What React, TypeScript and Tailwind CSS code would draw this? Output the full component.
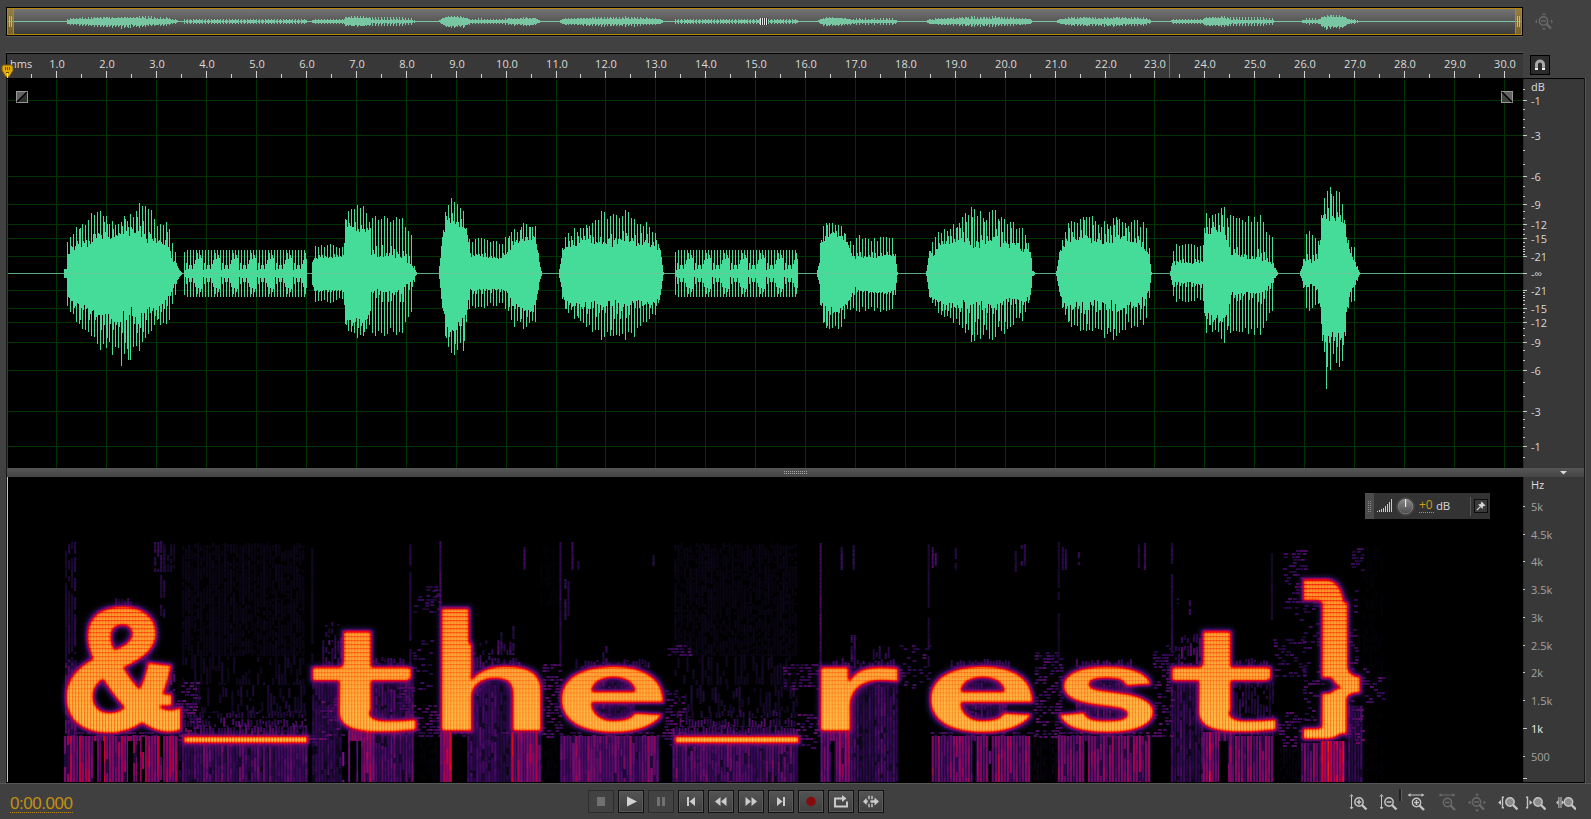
import React from "react";

/* ---------- helpers ---------- */

function makeRandom(seed: number) {
  let s = seed >>> 0;
  return () => {
    s = (s * 1664525 + 1013904223) >>> 0;
    return s / 4294967296;
  };
}

type Key = [number, number, number];

function sample(keys: Key[], x: number): [number, number] {
  for (let i = 1; i < keys.length; i++) {
    if (x <= keys[i][0]) {
      const a = keys[i - 1];
      const b = keys[i];
      const t = (x - a[0]) / (b[0] - a[0] || 1);
      return [a[1] + (b[1] - a[1]) * t, a[2] + (b[2] - a[2]) * t];
    }
  }
  return [1, 1];
}

/* ---------- waveform data: [x, peak, body] above and below the axis ---------- */

interface Burst {
  comb?: boolean;
  up: Key[];
  down: Key[];
}

const BURSTS: Burst[] = [
  {
    up: [[64, 4, 3], [66, 5, 4], [67, 35, 16], [73, 42, 22], [85, 54, 23], [91, 66, 28], [98, 60, 30], [104, 62, 34], [113, 50, 32], [121, 56, 34], [130, 58, 36], [137, 68, 40], [146, 68, 30], [155, 56, 28], [160, 48, 26], [166, 50, 26], [170, 44, 18], [172, 30, 11], [176, 18, 9], [178, 5, 4], [181, 1, 1]],
    down: [[64, 4, 3], [66, 5, 4], [67, 36, 20], [73, 44, 28], [85, 62, 30], [91, 68, 36], [98, 72, 36], [104, 78, 30], [113, 80, 43], [121, 80, 38], [130, 84, 30], [137, 78, 44], [146, 62, 33], [155, 52, 30], [165, 50, 24], [170, 46, 20], [172, 30, 10], [176, 18, 8], [178, 5, 3], [181, 1, 1]],
  },
  { comb: true, up: [[184, 21, 3], [186, 23, 3], [306, 23, 3]], down: [[184, 21, 3], [186, 23, 3], [306, 23, 3]] },
  {
    up: [[312, 12, 10], [314, 28, 14], [343, 28, 15], [345, 54, 42], [349, 62, 46], [356, 70, 42], [362, 70, 38], [369, 52, 40], [371, 56, 16], [403, 57, 15], [406, 46, 9], [412, 38, 5], [414, 8, 4], [416, 1, 1]],
    down: [[312, 12, 8], [314, 28, 16], [343, 28, 15], [345, 50, 44], [349, 58, 46], [356, 66, 42], [361, 68, 44], [368, 50, 40], [371, 60, 15], [403, 60, 15], [406, 46, 9], [412, 38, 5], [414, 8, 3], [416, 1, 1]],
  },
  {
    up: [[439, 8, 4], [441, 32, 26], [446, 66, 46], [450, 76, 50], [455, 72, 46], [460, 68, 42], [464, 62, 44], [467, 44, 34], [470, 32, 15], [475, 38, 15], [490, 34, 14], [500, 30, 13], [506, 38, 18], [514, 45, 26], [520, 48, 32], [535, 51, 30], [538, 20, 16], [541, 2, 1]],
    down: [[439, 5, 3], [441, 30, 24], [446, 70, 50], [450, 82, 52], [455, 80, 48], [460, 72, 44], [464, 80, 42], [467, 42, 32], [470, 34, 13], [475, 37, 15], [490, 33, 14], [500, 30, 14], [506, 37, 16], [514, 54, 28], [525, 54, 34], [535, 51, 30], [538, 16, 12], [541, 2, 1]],
  },
  {
    up: [[559, 4, 3], [562, 25, 20], [564, 37, 24], [575, 45, 26], [590, 50, 28], [600, 60, 26], [610, 62, 25], [620, 60, 25], [628, 66, 25], [632, 55, 26], [645, 52, 28], [655, 42, 24], [660, 26, 22], [663, 2, 1]],
    down: [[559, 4, 3], [562, 25, 18], [564, 37, 25], [575, 44, 29], [590, 57, 27], [603, 64, 25], [620, 67, 25], [636, 61, 25], [645, 50, 27], [655, 42, 25], [660, 24, 20], [663, 2, 1]],
  },
  { comb: true, up: [[675, 21, 3], [679, 23, 3], [797, 23, 3]], down: [[675, 21, 3], [679, 23, 3], [797, 23, 3]] },
  {
    up: [[817, 3, 2], [819, 14, 10], [821, 44, 28], [825, 50, 32], [831, 53, 36], [842, 50, 33], [847, 33, 28], [853, 32, 12], [858, 38, 15], [870, 36, 15], [892, 37, 16], [895, 20, 16], [897, 2, 1]],
    down: [[817, 3, 2], [819, 14, 10], [821, 46, 28], [828, 57, 33], [842, 56, 31], [848, 35, 26], [855, 38, 13], [870, 37, 17], [892, 38, 17], [895, 22, 14], [897, 2, 1]],
  },
  {
    up: [[926, 2, 1], [929, 25, 22], [934, 38, 16], [940, 42, 26], [955, 50, 30], [965, 61, 25], [970, 65, 25], [985, 59, 24], [996, 63, 27], [1005, 53, 25], [1015, 50, 25], [1024, 43, 20], [1030, 26, 20], [1032, 3, 2], [1034, 1, 1]],
    down: [[926, 2, 1], [929, 26, 22], [940, 42, 27], [955, 50, 28], [965, 61, 25], [973, 66, 25], [990, 64, 26], [1005, 59, 23], [1015, 50, 24], [1024, 43, 24], [1030, 24, 20], [1032, 3, 2], [1034, 1, 1]],
  },
  {
    up: [[1056, 2, 1], [1059, 22, 18], [1062, 34, 24], [1068, 51, 28], [1075, 53, 30], [1090, 62, 30], [1100, 50, 28], [1110, 53, 26], [1118, 62, 31], [1125, 51, 32], [1135, 52, 30], [1145, 52, 20], [1149, 26, 16], [1151, 2, 1]],
    down: [[1056, 2, 1], [1059, 20, 18], [1062, 34, 26], [1068, 49, 28], [1080, 59, 26], [1100, 61, 26], [1117, 68, 25], [1125, 56, 27], [1135, 51, 27], [1145, 52, 20], [1149, 26, 14], [1151, 2, 1]],
  },
  {
    up: [[1170, 2, 1], [1172, 20, 10], [1175, 29, 8], [1203, 29, 9], [1204, 57, 40], [1210, 64, 38], [1222, 66, 40], [1230, 59, 18], [1240, 56, 14], [1262, 57, 12], [1265, 43, 10], [1272, 36, 7], [1274, 7, 5], [1277, 1, 1]],
    down: [[1170, 2, 1], [1172, 20, 10], [1175, 28, 7], [1203, 28, 9], [1204, 56, 36], [1212, 62, 40], [1224, 67, 40], [1230, 59, 18], [1262, 61, 16], [1268, 40, 10], [1272, 36, 8], [1274, 7, 4], [1277, 1, 1]],
  },
  {
    up: [[1300, 2, 1], [1303, 14, 9], [1305, 41, 10], [1312, 41, 10], [1318, 34, 14], [1321, 60, 42], [1323, 84, 50], [1328, 80, 52], [1332, 88, 50], [1339, 85, 50], [1344, 68, 48], [1346, 42, 34], [1350, 29, 19], [1355, 24, 7], [1357, 8, 4], [1359, 1, 1]],
    down: [[1300, 2, 1], [1303, 14, 9], [1305, 36, 10], [1312, 37, 10], [1318, 32, 14], [1321, 52, 40], [1323, 88, 56], [1328, 94, 60], [1332, 90, 58], [1339, 96, 58], [1344, 90, 56], [1346, 44, 36], [1350, 30, 17], [1355, 26, 7], [1357, 8, 4], [1359, 1, 1]],
  },
];

const COMB_BODY = [3, 10, 4, 8, 8, 4, 9, 13, 20, 14, 18, 15];

function buildColumns(): Array<[number, number, number]> {
  const rnd = makeRandom(11);
  const out: Array<[number, number, number]> = [];
  for (const b of BURSTS) {
    const x0 = b.up[0][0];
    const x1 = b.up[b.up.length - 1][0];
    for (let x = x0; x <= x1; x++) {
      const [pu, bu] = sample(b.up, x);
      const [pd, bd] = sample(b.down, x);
      const i = x - x0;
      let u: number;
      let d: number;
      if (b.comb) {
        if (i % 3 === 0) {
          u = pu;
          d = pd;
        } else {
          const v = COMB_BODY[(Math.floor(i / 3) * 2 + (i % 3) - 1) % COMB_BODY.length];
          u = v;
          d = v;
        }
      } else if (i % 3 === 0) {
        const j = 0.88 + rnd() * 0.15;
        u = pu * j;
        d = pd * (j + (rnd() - 0.5) * 0.06);
      } else {
        const thin = bu < 20;
        const r = rnd();
        const k = thin ? (i % 3 === 1 ? 0.3 : 0.12) : i % 3 === 1 ? (r > 0.5 ? 0.9 : 0.5) : 0.3;
        u = bu + (pu - bu) * k * rnd();
        d = bd + (pd - bd) * k * rnd();
      }
      out.push([x, Math.round(u), Math.round(d)]);
    }
  }
  const set = (x: number, v: number) => {
    const c = out.find((o) => o[0] === x);
    if (c) c[2] = v;
  };
  set(1326, 115);
  set(121, 92);
  set(128, 86);
  return out;
}

const COLUMNS = buildColumns();
const WAVE_PATH = COLUMNS.map(([x, u, d]) => `M${x - 6.5} ${194 - u}V${195 + d}`).join("");
const MINI_PATH = COLUMNS.map(([x, u, d]) => {
  const a = Math.max(0, Math.round(u * 0.072));
  const b = Math.max(0, Math.round(d * 0.072));
  return `M${x - 6.5} ${14 - a}V${15 + b}`;
}).join("");

const tickX = (n: number) => 6 + Math.round(50 * n) - Math.floor(n / 11.5);
const SECONDS = Array.from({ length: 30 }, (_, i) => i + 1);
const GRID_ROWS = [100, 135, 176, 204, 224, 238, 256, 290, 308, 322, 342, 370, 411, 446];

const DB_MARKS: Array<[number, string]> = [
  [100, "-1"], [135, "-3"], [176, "-6"], [204, "-9"], [224, "-12"], [238, "-15"], [256, "-21"], [273, "-∞"],
  [290, "-21"], [308, "-15"], [322, "-12"], [342, "-9"], [370, "-6"], [411, "-3"], [446, "-1"],
];
const DB_MINOR = [89, 109, 119, 127, 150, 164, 186, 196, 211, 218, 229, 234, 242, 246, 249, 251, 254, 292, 295, 297, 300, 304, 312, 317, 328, 335, 350, 360, 382, 396, 419, 427, 437, 457];
const HZ_MARKS: Array<[number, string]> = [
  [506, "5k"], [534, "4.5k"], [561, "4k"], [589, "3.5k"], [617, "3k"], [645, "2.5k"], [672, "2k"], [700, "1.5k"], [728, "1k"], [756, "500"],
];

/* ---------- spectrogram ---------- */

const SPECTRO_FONT = '"Liberation Mono", monospace';

/** x0, x1, y0, y1 */
type Box = [number, number, number, number];

interface Letter {
  ch: string;
  x0: number;
  x1: number;
  top: number;
  bottom: number;
  /** height in em that "top" refers to; the ink's own top when left out */
  at?: number;
  /** energy bands added to the letter */
  bands?: Box[];
  /** extra weight, in em/100 */
  weight?: number;
  /** inner anchors, [height in em, y], from top to bottom */
  knots?: Array<[number, number]>;
}

const LETTERS: Letter[] = [
  { ch: "&", x0: 68, x1: 179, top: 609, bottom: 730.5, weight: 2.6, bands: [[149, 172, 694, 706]] },
  { ch: "_", x0: 182, x1: 309, top: 736.5, bottom: 743.5 },
  { ch: "t", x0: 319, x1: 417, top: 667, bottom: 732, at: 0.528, bands: [[343, 371, 631, 712], [312, 409, 667, 681]] },
  { ch: "h", x0: 441, x1: 541, top: 666, bottom: 731, at: 0.539, bands: [[441, 469, 608, 731]] },
  { ch: "e", x0: 560, x1: 664, top: 667, bottom: 732, weight: 0.8 },
  { ch: "_", x0: 673, x1: 800, top: 736.5, bottom: 743.5 },
  { ch: "r", x0: 820, x1: 898, top: 667, bottom: 731, bands: [[820, 848, 667, 731]] },
  { ch: "e", x0: 929, x1: 1033, top: 667, bottom: 732, weight: 0.8 },
  { ch: "s", x0: 1058, x1: 1152, top: 667, bottom: 732, weight: 0.8 },
  { ch: "t", x0: 1178, x1: 1276, top: 667, bottom: 732, at: 0.528, bands: [[1202, 1230, 631, 712], [1171, 1268, 667, 681]] },
  { ch: "}", x0: 1301, x1: 1360, top: 577, bottom: 739, knots: [[0.26, 687]], bands: [[1321, 1347, 602, 678], [1321, 1346, 693, 734]] },
];

interface Ink {
  left: number;
  right: number;
  up: number;
  down: number;
}

function measureInk(chars: string[]): Record<string, Ink> {
  const ctx = document.createElement("canvas").getContext("2d")!;
  ctx.font = `bold 100px ${SPECTRO_FONT}`;
  const out: Record<string, Ink> = {};
  for (const c of chars) {
    const m = ctx.measureText(c);
    out[c] = { left: -m.actualBoundingBoxLeft, right: m.actualBoundingBoxRight, up: m.actualBoundingBoxAscent, down: m.actualBoundingBoxDescent };
  }
  return out;
}

function Letters({ ink, id, shade, ...rest }: { ink: Record<string, Ink>; id: string; shade: string } & React.SVGProps<SVGGElement>) {
  return (
    <g {...rest} fill={shade} fontFamily={SPECTRO_FONT} fontWeight={700} fontSize={100}>
      {LETTERS.map((l, i) => {
        const m = ink[l.ch];
        const sx = (l.x1 - l.x0) / (m.right - m.left);
        const tx = l.x0 - m.left * sx;
        const bands = (l.bands ?? []).map(([x0, x1, y0, y1]) => <rect key={`${x0}-${y0}`} x={x0} y={y0} width={x1 - x0} height={y1 - y0} rx="2" />);
        if (!l.knots) {
          const up = l.at ? l.at * 100 : m.up;
          const sy = (l.bottom - l.top) / (up + m.down);
          return (
            <g key={i}>
              <text transform={`matrix(${sx} 0 0 ${sy} ${tx} ${l.bottom - m.down * sy})`} stroke={l.weight ? shade : undefined} strokeWidth={l.weight}>{l.ch}</text>
              {bands}
            </g>
          );
        }
        const pts: Array<[number, number]> = [[m.up, l.top], ...l.knots.map(([u, y]): [number, number] => [u * 100, y]), [-m.down, l.bottom]];
        return (
          <g key={i}>
            {bands}
            {pts.slice(1).map((p, k) => {
              const q = pts[k];
              const sy = (p[1] - q[1]) / (q[0] - p[0]);
              const base = p[1] + p[0] * sy;
              const cut = `${id}-${i}-${k}`;
              const y0 = k === 0 ? q[1] - 12 : q[1];
              const y1 = k === pts.length - 2 ? p[1] + 12 : p[1];
              return (
                <g key={cut}>
                  <clipPath id={cut}>
                    <rect x={l.x0 - 14} y={y0} width={l.x1 - l.x0 + 28} height={y1 - y0} />
                  </clipPath>
                  <g clipPath={`url(#${cut})`}>
                    <text transform={`matrix(${sx} 0 0 ${sy} ${tx} ${base})`}>{l.ch}</text>
                  </g>
                </g>
              );
            })}
          </g>
        );
      })}
    </g>
  );
}

/* [x0, x1, y0, y1, level, chance of a gap, dash length] */
type Field = [number, number, number, number, number, number, number];

const COLUMN_FIELDS: Field[] = [
  // harmonics under the letters
  [64, 176, 736, 783, 0.51, 0.07, 12],
  [176, 182, 736, 783, 0.25, 0.2, 8],
  [182, 308, 743, 783, 0.37, 0.05, 8],
  [182, 308, 725, 738, 0.38, 0.15, 4],
  [312, 342, 682, 783, 0.29, 0.1, 6],
  [342, 372, 730, 783, 0.53, 0.05, 12],
  [372, 412, 720, 783, 0.42, 0.06, 8],
  [372, 412, 681, 720, 0.34, 0.15, 5],
  [440, 451, 732, 783, 0.6, 0.03, 14],
  [467, 512, 682, 783, 0.33, 0.1, 6],
  [511, 540, 732, 783, 0.53, 0.05, 12],
  [560, 660, 736, 783, 0.47, 0.05, 12],
  [672, 796, 743, 783, 0.39, 0.05, 8],
  [672, 796, 725, 738, 0.38, 0.15, 4],
  [820, 848, 732, 783, 0.53, 0.05, 12],
  [847, 897, 684, 783, 0.33, 0.1, 6],
  [928, 1030, 736, 783, 0.47, 0.05, 12],
  [1057, 1150, 736, 783, 0.46, 0.05, 12],
  [1170, 1202, 682, 783, 0.3, 0.1, 7],
  [1202, 1217, 732, 783, 0.55, 0.05, 12],
  [1217, 1232, 732, 783, 0.46, 0.05, 12],
  [1232, 1272, 682, 736, 0.27, 0.35, 6],
  [1228, 1272, 736, 783, 0.43, 0.04, 12],
  [1300, 1322, 743, 783, 0.43, 0.05, 12],
  [1320, 1344, 741, 783, 0.62, 0, 18],
  [1344, 1360, 705, 783, 0.3, 0.12, 8],
  // insides of the letters
  [575, 635, 680, 728, 0.34, 0.25, 3],
  [944, 1005, 680, 728, 0.34, 0.25, 3],
  [1075, 1130, 682, 726, 0.34, 0.25, 3],
  // left of the ampersand
  [65, 76, 541, 660, 0.26, 0.3, 6],
  [65, 76, 660, 735, 0.38, 0.25, 4],
  [154, 164, 541, 572, 0.32, 0.3, 4],
  [164, 174, 541, 572, 0.22, 0.35, 4],
  [160, 164, 572, 618, 0.28, 0.25, 5],
  // spikes over the letters
  [112, 132, 598, 608, 0.3, 0.3, 5],
  [152, 174, 668, 694, 0.42, 0.35, 5],
  [322, 342, 638, 668, 0.35, 0.25, 5],
  [325, 340, 622, 638, 0.28, 0.5, 4],
  [372, 408, 657, 668, 0.32, 0.25, 4],
  [470, 520, 655, 668, 0.36, 0.35, 5],
  [470, 514, 640, 655, 0.33, 0.65, 6],
  [497, 502, 630, 655, 0.35, 0.3, 6],
  [509, 514, 626, 655, 0.35, 0.3, 6],
  [575, 650, 659, 668, 0.32, 0.3, 4],
  [602, 607, 646, 662, 0.32, 0.2, 4],
  [832, 895, 658, 668, 0.33, 0.3, 4],
  [850, 854, 632, 660, 0.32, 0.2, 5],
  [872, 892, 646, 660, 0.3, 0.5, 5],
  [950, 1010, 659, 668, 0.31, 0.3, 4],
  [1075, 1130, 659, 668, 0.31, 0.3, 4],
  [1174, 1200, 646, 668, 0.35, 0.3, 5],
  [1180, 1200, 632, 646, 0.3, 0.55, 5],
  [1232, 1270, 658, 668, 0.31, 0.3, 4],
  // haze over the underscores
  [182, 304, 543, 656, 0.14, 0.2, 4],
  [674, 796, 543, 656, 0.13, 0.24, 4],
  [182, 304, 655, 685, 0.19, 0.6, 12],
  [674, 796, 655, 685, 0.19, 0.6, 12],
  [186, 304, 685, 713, 0.22, 0.62, 8],
  [678, 796, 685, 713, 0.22, 0.62, 8],
  [184, 306, 710, 718, 0.27, 0.45, 5],
  [676, 796, 710, 718, 0.27, 0.45, 5],
  [184, 306, 718, 727, 0.33, 0.25, 5],
  [676, 796, 718, 727, 0.33, 0.25, 5],
  // long onset lines
  [311, 314, 541, 665, 0.25, 0.1, 9],
  [409, 412, 541, 665, 0.25, 0.2, 9],
  [439, 442, 541, 608, 0.32, 0.05, 9],
  [559, 562, 541, 667, 0.29, 0.05, 9],
  [564, 568, 579, 620, 0.32, 0.15, 5],
  [819, 822, 541, 667, 0.36, 0.05, 9],
  [927, 930, 541, 667, 0.26, 0.1, 9],
  [931, 935, 545, 568, 0.34, 0.1, 7],
  [1057, 1060, 541, 667, 0.24, 0.1, 9],
  [1170, 1173, 541, 667, 0.26, 0.1, 9],
  [1270, 1273, 541, 620, 0.22, 0.15, 9],
  [840, 843, 547, 570, 0.34, 0.1, 5],
  [852, 855, 542, 570, 0.3, 0.1, 5],
  [523, 526, 546, 570, 0.36, 0.1, 5],
  [571, 574, 541, 570, 0.34, 0.1, 5],
  [577, 580, 560, 570, 0.34, 0.1, 5],
  [652, 655, 552, 566, 0.34, 0.1, 5],
  [954, 957, 548, 570, 0.34, 0.1, 5],
  [1014, 1017, 550, 572, 0.34, 0.1, 5],
  [1020, 1024, 543, 566, 0.32, 0.1, 5],
  [1061, 1065, 546, 570, 0.34, 0.1, 5],
  [1077, 1080, 549, 565, 0.34, 0.1, 5],
  [1137, 1140, 541, 568, 0.32, 0.1, 5],
  [1143, 1146, 541, 570, 0.32, 0.1, 5],
  [1176, 1179, 597, 604, 0.34, 0.1, 5],
  [1188, 1191, 597, 615, 0.34, 0.2, 5],
  // faint tails
  [1362, 1382, 545, 780, 0.045, 0.5, 5],
  [540, 560, 545, 605, 0.05, 0.5, 5],
  [420, 438, 735, 780, 0.06, 0.4, 5],
  [541, 559, 735, 780, 0.07, 0.4, 5],
  [1033, 1056, 735, 780, 0.1, 0.3, 5],
  [1276, 1300, 745, 780, 0.08, 0.3, 5],
];

/* [x0, x1, y0, y1, level, density] */
type Speckle = [number, number, number, number, number, number];

const SPECKLES: Speckle[] = [
  [176, 198, 682, 740, 0.37, 0.4],
  [302, 326, 735, 744, 0.38, 0.65],
  [320, 344, 698, 735, 0.38, 0.5],
  [398, 412, 684, 718, 0.37, 0.5],
  [412, 440, 590, 612, 0.33, 0.3],
  [425, 440, 586, 606, 0.35, 0.5],
  [412, 432, 640, 690, 0.33, 0.32],
  [416, 440, 705, 736, 0.37, 0.55],
  [541, 560, 664, 738, 0.36, 0.55],
  [664, 682, 690, 746, 0.37, 0.5],
  [666, 690, 645, 656, 0.36, 0.6],
  [782, 800, 664, 690, 0.35, 0.45],
  [798, 820, 664, 690, 0.37, 0.6],
  [796, 820, 714, 748, 0.37, 0.45],
  [898, 928, 645, 690, 0.34, 0.28],
  [1033, 1058, 652, 738, 0.36, 0.52],
  [1152, 1170, 645, 738, 0.36, 0.48],
  [1276, 1302, 712, 748, 0.35, 0.45],
  [1272, 1302, 636, 676, 0.33, 0.36],
  [1282, 1302, 550, 622, 0.35, 0.34],
  [1302, 1320, 596, 720, 0.34, 0.32],
  [1290, 1306, 550, 576, 0.35, 0.34],
  [1350, 1362, 548, 572, 0.35, 0.38],
  [1348, 1356, 590, 676, 0.33, 0.3],
  [1360, 1384, 668, 702, 0.35, 0.32],
  [1346, 1360, 700, 745, 0.37, 0.5],
  [62, 182, 732, 738, 0.36, 0.6],
  [440, 540, 732, 738, 0.33, 0.35],
  [560, 664, 732, 738, 0.35, 0.6],
  [928, 1033, 732, 738, 0.35, 0.6],
  [1057, 1152, 732, 738, 0.35, 0.6],
];

function buildField(): Array<[number, string]> {
  const rnd = makeRandom(77);
  const levels = new Map<number, string[]>();
  const put = (level: number, d: string) => {
    const key = Math.max(1, Math.min(38, Math.round(level * 40)));
    const list = levels.get(key);
    if (list) list.push(d);
    else levels.set(key, [d]);
  };
  for (const [x0, x1, y0, y1, level, gap, dash] of COLUMN_FIELDS) {
    for (let x = x0; x < x1; x += 3) {
      const own = level * (0.78 + rnd() * 0.42);
      const dead = level > 0.45 && rnd() < gap * 0.9;
      if (level >= 0.28 && x1 - x0 > 8 && y1 - y0 > 35 && !dead) put(own * 0.56, `M${x} ${y0}h3v${y1 - y0}h-3z`);
      let y = y0 + (level < 0.4 ? Math.floor(rnd() * 4) : 0);
      while (y < y1) {
        const h = Math.min(y1 - y, Math.max(2, Math.round(dash * (0.4 + rnd()))));
        if (!(dead && rnd() < 0.85) && rnd() > gap) {
          put(own * (0.88 + rnd() * 0.26), `M${x} ${y}h2.2v${h}h-2.2z`);
        }
        y += h;
      }
    }
  }
  for (const [x0, x1, y0, y1, level, density] of SPECKLES) {
    for (let y = y0; y < y1; y += 3) {
      for (let x = x0; x < x1; x += 4) {
        if (rnd() < density) {
          const jx = x + Math.round(rnd() * 2);
          put(level * (0.75 + rnd() * 0.45), `M${jx} ${y}h4v2h-4z`);
        }
      }
    }
  }
  return [...levels.entries()].sort((a, b) => a[0] - b[0]).map(([k, d]) => [k / 40, d.join("")]);
}

const FIELD = buildField();
const gray = (v: number) => `rgb(${Math.round(v * 255)} ${Math.round(v * 255)} ${Math.round(v * 255)})`;

const DARK_GAPS: Array<[number, number]> = [[93, 4], [101, 3], [128, 5], [137, 3], [350, 6], [358, 3], [452, 13], [830, 4], [972, 3], [1046, 3], [1084, 3], [1218, 9]];

function Spectrogram() {
  const ink = React.useMemo(() => measureInk(["&", "_", "t", "h", "e", "r", "s", "}"]), []);
  return (
    <svg className="block h-full w-full" viewBox="7 477 1515 305" preserveAspectRatio="none">
      <defs>
        <filter id="heat" filterUnits="userSpaceOnUse" x="7" y="477" width="1515" height="305" colorInterpolationFilters="sRGB">
          <feComponentTransfer>
            <feFuncR type="table" tableValues="0 .035 .09 .2 .37 .54 .73 .93 1 1 1" />
            <feFuncG type="table" tableValues="0 .02 .035 .03 .05 .03 0 .02 .3 .57 .78" />
            <feFuncB type="table" tableValues="0 .07 .17 .33 .4 .37 .24 .06 .03 .17 .3" />
          </feComponentTransfer>
        </filter>
        <filter id="soft" filterUnits="userSpaceOnUse" x="7" y="477" width="1515" height="305" colorInterpolationFilters="sRGB">
          <feGaussianBlur stdDeviation="0.65" />
        </filter>
        <filter id="edge" filterUnits="userSpaceOnUse" x="7" y="477" width="1515" height="305" colorInterpolationFilters="sRGB">
          <feGaussianBlur stdDeviation="1.4" />
        </filter>
        <filter id="halo" filterUnits="userSpaceOnUse" x="7" y="477" width="1515" height="305" colorInterpolationFilters="sRGB">
          <feMorphology operator="dilate" radius="2.5" />
          <feGaussianBlur stdDeviation="2.4" />
        </filter>
        <pattern id="bars" width="3" height="6" patternUnits="userSpaceOnUse">
          <rect x="0" y="0" width="1" height="6" fill="#000" />
        </pattern>
        <pattern id="rows" width="6" height="4" patternUnits="userSpaceOnUse">
          <rect x="0" y="0" width="6" height="1" fill="#000" />
          <rect x="0" y="1" width="6" height="1" fill="#000" fillOpacity="0.35" />
        </pattern>
        <linearGradient id="fadeDown" x1="0" y1="560" x2="0" y2="782" gradientUnits="userSpaceOnUse">
          <stop offset="0" stopColor="#fff" stopOpacity="0.3" />
          <stop offset="0.5" stopColor="#fff" stopOpacity="0.5" />
          <stop offset="0.8" stopColor="#fff" stopOpacity="1" />
        </linearGradient>
        <linearGradient id="fadeUp" x1="0" y1="560" x2="0" y2="782" gradientUnits="userSpaceOnUse">
          <stop offset="0" stopColor="#fff" stopOpacity="1" />
          <stop offset="0.45" stopColor="#fff" stopOpacity="0.5" />
          <stop offset="0.65" stopColor="#fff" stopOpacity="0.15" />
          <stop offset="1" stopColor="#fff" stopOpacity="0" />
        </linearGradient>
        <linearGradient id="dim" x1="0" y1="577" x2="0" y2="745" gradientUnits="userSpaceOnUse">
          <stop offset="0" stopColor="#000" stopOpacity="0.1" />
          <stop offset="0.6" stopColor="#000" stopOpacity="0.05" />
          <stop offset="1" stopColor="#000" stopOpacity="0" />
        </linearGradient>
        <mask id="maskDown"><rect x="7" y="477" width="1515" height="305" fill="url(#fadeDown)" /></mask>
        <mask id="maskUp"><rect x="7" y="477" width="1515" height="305" fill="url(#fadeUp)" /></mask>
      </defs>
      <g filter="url(#heat)">
        <rect x="7" y="477" width="1515" height="305" fill="#000" />
        <g filter="url(#soft)">
          {FIELD.map(([v, d]) => (
            <path key={v} d={d} fill={gray(v)} />
          ))}
          {DARK_GAPS.map(([x, w]) => (
            <rect key={x} x={x} y="741" width={w} height="42" fill="#000" />
          ))}
        </g>
        <Letters ink={ink} id="glow" filter="url(#halo)" shade={gray(0.44)} style={{ mixBlendMode: "lighten" }} />
        <Letters ink={ink} id="core" filter="url(#edge)" shade={gray(1)} />
        <rect x="7" y="477" width="1515" height="305" fill="url(#dim)" />
        <g mask="url(#maskDown)">
          <rect x="7" y="477" width="1515" height="305" fill="url(#bars)" opacity="0.15" />
        </g>
        <g mask="url(#maskUp)">
          <rect x="7" y="477" width="1515" height="305" fill="url(#rows)" opacity="0.17" />
        </g>
      </g>
      <rect x="7" y="477" width="1" height="305" fill="#e0b4bb" />
    </svg>
  );
}

/* ---------- overview, ruler, waveform ---------- */

function Overview() {
  return (
    <div className="flex h-[29px] w-[1517px] border border-black bg-gradient-to-b from-[#767676] to-[#3a3a3a]">
      <svg className="block h-full w-full" viewBox="0 0 1515 27" shapeRendering="crispEdges">
        <rect x="0" y="13" width="1515" height="1" fill="#79c6a2" />
        <path d={MINI_PATH} transform="translate(0 -1)" stroke="#79c6a2" strokeWidth="1" fill="none" />
        {[753, 755, 757, 759].map((x) => (
          <g key={x}>
            <rect x={x} y="10" width="1" height="7" fill="#e6e6e6" />
            <rect x={x + 1} y="10" width="1" height="7" fill="#333" />
          </g>
        ))}
        <rect x="0.5" y="0.5" width="1514" height="26" fill="none" stroke="#b9860c" />
        <rect x="0.5" y="0.5" width="6" height="26" fill="#b9860c" fillOpacity="0.5" stroke="#b9860c" />
        <rect x="1508.5" y="0.5" width="6" height="26" fill="#b9860c" fillOpacity="0.5" stroke="#b9860c" />
        <path d="M2.5 8v11M4.5 8v11M1510.5 8v11M1512.5 8v11" stroke="#c9b87c" />
      </svg>
    </div>
  );
}

function Ruler() {
  return (
    <div className="relative h-[25px] w-[1517px] border-l border-t border-black bg-[#383838]">
      <svg className="block" width="1516" height="24" viewBox="7 54 1516 24">
        <rect x="1169" y="54" width="1" height="24" fill="#8a6a1c" />
        <g fill="#d2d2d2" shapeRendering="crispEdges">
          {SECONDS.map((n) => (
            <rect key={n} x={tickX(n)} y="71" width="1" height="7" />
          ))}
          {[0, ...SECONDS.slice(0, 29)].map((n) => (
            <rect key={n} x={tickX(n + 0.5)} y="74" width="1" height="4" />
          ))}
        </g>
        <g fill="#dadada" fontFamily='"Open Sans", sans-serif' fontSize="11">
          <text x="10" y="68">hms</text>
          {SECONDS.map((n) => (
            <text key={n} x={tickX(n) + 1} y="68" textAnchor="middle">{n.toFixed(1)}</text>
          ))}
        </g>
      </svg>
      <svg className="absolute -left-[6px] top-[10px]" width="13" height="15" viewBox="0 0 13 15">
        <path d="M1 2.5 2.5 1h8L12 2.500V6.500L9 11.500 7 13.500H6L4 11.500 1 6.500z" fill="#e2a90e" stroke="#7c5a05" />
        <path d="M4.500 3v3M6.500 3v3M8.500 3v3" stroke="#6b4d04" />
        <rect x="5" y="8" width="3" height="1" fill="#6b4d04" />
        <rect x="6" y="9" width="1" height="5" fill="#f0e0c0" />
      </svg>
    </div>
  );
}

function FadeHandle({ flip, x }: { flip?: boolean; x: number }) {
  return (
    <g transform={`translate(${x} 12)`}>
      <rect x="0.5" y="0.5" width="11" height="11" fill={flip ? "#3c463c" : "#303030"} stroke="#989898" />
      <path d={flip ? "M1 1h10v10z" : "M1 1h10L1 11z"} fill="#666" fillOpacity="0.9" />
      <path d={flip ? "M1 1 11 11" : "M1 11 11 1"} stroke="#000" strokeWidth="1.500" />
    </g>
  );
}

function Waveform() {
  return (
    <svg className="block bg-black" width="1516" height="389" viewBox="0 0 1516 389">
      <g fill="#003300" shapeRendering="crispEdges">
        {SECONDS.map((n) => (
          <rect key={n} x={tickX(n) - 7} y="0" width="1" height="389" />
        ))}
        {GRID_ROWS.map((y) => (
          <rect key={y} x="0" y={y - 79} width="1516" height="1" />
        ))}
      </g>
      <path d={WAVE_PATH} stroke="#44dc98" strokeWidth="1" fill="none" shapeRendering="crispEdges" />
      <rect x="0" y="194" width="1516" height="1" fill="#66c795" fillOpacity="0.85" />
      <FadeHandle x={9} />
      <FadeHandle x={1494} flip />
      <rect x="0" y="0" width="1" height="389" fill="#b80000" />
    </svg>
  );
}

function Scale({ from, height, unit, marks, minor, unitY, hz }: { from: number; height: number; unit: string; marks: Array<[number, string]>; minor: number[]; unitY: number; hz?: boolean }) {
  return (
    <svg className="block bg-[#383838]" width="61" height={height} viewBox={`1523 ${from} 61 ${height}`}>
      <rect x="1523" y={from} width="1" height={height} fill="#2a2a2a" />
      <g fill="#c8c8c8" shapeRendering="crispEdges">
        {marks.map(([y, t]) => (
          <rect key={y} x="1523" y={y} width={hz && t !== "1k" ? 2 : 4} height="1" />
        ))}
        {minor.map((y) => (
          <rect key={y} x="1523" y={y} width={hz ? 4 : 2} height="1" />
        ))}
      </g>
      <g fontFamily='"Open Sans", sans-serif' fontSize="11" fill={hz ? "#a2a2a2" : "#d6d6d6"}>
        <text x="1531" y={unitY} fill="#dcdcdc">{unit}</text>
        {marks.map(([y, t]) => (
          <text key={y} x="1531" y={y + 5} fill={t === "1k" ? "#ececec" : undefined}>{t}</text>
        ))}
      </g>
    </svg>
  );
}

function Splitter() {
  return (
    <div className="relative flex h-[9px] w-[1577px] items-center justify-center bg-gradient-to-b from-[#565656] to-[#454545]">
      <svg width="24" height="3" viewBox="0 0 24 3" shapeRendering="crispEdges">
        {Array.from({ length: 12 }, (_, i) => (
          <path key={i} d={`M${i * 2} .5h1M${i * 2} 2.500h1`} stroke="#a8a8a8" />
        ))}
      </svg>
      <svg className="absolute right-[17px] top-[3px]" width="7" height="4" viewBox="0 0 7 4">
        <path d="M0 0h7L3.500 3.500z" fill="#d8d8d8" />
      </svg>
    </div>
  );
}

function GainPanel() {
  return (
    <div className="absolute left-[1358px] top-[16px] flex h-[26px] w-[125px] items-center bg-[#333333] font-['Open_Sans',sans-serif] text-[11px] text-[#d8d8d8]">
      <div className="flex h-full w-[9px] items-center justify-center bg-[#4c4c4c]">
        <svg width="4" height="11" viewBox="0 0 4 11" shapeRendering="crispEdges">
          <path d="M.5 0v11M2.500 0v11" stroke="#8e8e8e" strokeDasharray="1 1" />
        </svg>
      </div>
      <svg className="ml-[3px]" width="15" height="14" viewBox="0 0 15 14" shapeRendering="crispEdges">
        {[1, 2, 3, 4, 6, 8, 10, 13].map((h, i) => (
          <rect key={h} x={i * 2} y={13 - h} width="1" height={h} fill="#c8c8c8" />
        ))}
      </svg>
      <svg className="ml-[4px]" width="19" height="19" viewBox="0 0 19 19">
        <defs>
          <linearGradient id="knob" x1="0" y1="0" x2="0" y2="1">
            <stop offset="0" stopColor="#8a8a8a" />
            <stop offset="1" stopColor="#4c4c4c" />
          </linearGradient>
        </defs>
        <circle cx="9.500" cy="9.500" r="8.800" fill="#232323" stroke="#5c5c5c" strokeWidth="0.700" />
        <circle cx="9.500" cy="9.500" r="7.500" fill="url(#knob)" stroke="#9a9a9a" strokeWidth="0.700" />
        <rect x="9" y="2" width="1.200" height="8" fill="#e6e6e6" />
      </svg>
      <span className="ml-[4px] h-[14px] w-[15px] border-b border-dotted border-[#c9920f] text-[12px] leading-[12px] tracking-[-0.2px] text-[#d29a12]">+0</span>
      <span className="ml-[2px] text-[11.5px] leading-[14px] tracking-[-0.4px]">dB</span>
      <div className="ml-auto mr-[3px] h-[19px] w-px bg-[#585858]" />
      <div className="mr-[2px] flex h-[14px] w-[14px] items-center justify-center border border-[#0e0e0e] bg-[#3a3a3a]">
        <svg width="10" height="10" viewBox="0 0 10 10">
          <path d="M5.500 .5 9.500 4.500 8.500 5 7 5.200 6.500 8 2 3.500 4.800 3 5 1.500z" fill="#d4d4d4" />
          <path d="M.8 9.200 4.200 5.800" stroke="#d4d4d4" strokeWidth="1.200" />
        </svg>
      </div>
    </div>
  );
}

/* ---------- bottom bar ---------- */

function TransportButton({ children, off }: { children: React.ReactNode; off?: boolean }) {
  return (
    <button
      className={
        off
          ? "flex h-[23px] w-[26px] items-center justify-center border border-[#2c2c2c] bg-[#424242]"
          : "flex h-[23px] w-[26px] items-center justify-center border border-[#111111] bg-gradient-to-b from-[#545454] to-[#404040] shadow-[inset_0_0_0_1px_#5a5a5a]"
      }
    >
      <svg width="16" height="13" viewBox="0 0 16 13">{children}</svg>
    </button>
  );
}

function Transport() {
  return (
    <div className="flex gap-[4px]">
      <TransportButton off><rect x="4" y="2" width="8" height="9" fill="#707070" /></TransportButton>
      <TransportButton><path d="M4 1.500 14 6.500 4 11.500z" fill="#d2d2d2" /></TransportButton>
      <TransportButton off><path d="M4 2h3v9H4zM9 2h3v9H9z" fill="#707070" /></TransportButton>
      <TransportButton><path d="M4 2h2v9H4zM12 2v9L6.500 6.500z" fill="#cccccc" /></TransportButton>
      <TransportButton><path d="M7.500 2v9L2 6.500zM13.500 2v9L8 6.500z" fill="#cccccc" /></TransportButton>
      <TransportButton><path d="M2.500 2v9L8 6.500zM8.500 2v9L14 6.500z" fill="#cccccc" /></TransportButton>
      <TransportButton><path d="M4 2v9L9.500 6.500zM10 2h2v9h-2z" fill="#cccccc" /></TransportButton>
      <TransportButton><circle cx="8" cy="6.500" r="4.700" fill="#860a0e" /></TransportButton>
      <TransportButton>
        <path d="M5 3.500H2v8h12v-5" fill="none" stroke="#cccccc" strokeWidth="1.900" />
        <path d="M5 2.500h4V0l4.500 3.500L9 7V4.500H5z" fill="#cccccc" />
      </TransportButton>
      <TransportButton>
        <path d="M0 6.500 3.500 3v2.200h1.200v2.600H3.500V10z" fill="#cccccc" />
        <path d="M6 .8v3.400M6 8.800v3.400M9 .8v3.400M9 8.800v3.400" stroke="#cccccc" strokeWidth="1.400" />
        <path d="M16 6.500 11.500 2.500v2.700H7.500v2.600h4v2.700z" fill="#cccccc" />
      </TransportButton>
    </div>
  );
}

function Lens({ x, y, sign }: { x: number; y: number; sign?: "plus" | "minus" }) {
  return (
    <g transform={`translate(${x} ${y})`}>
      <circle cx="0" cy="0" r="4.200" fill={sign ? "none" : "#8a8a8a"} stroke="#c4c4c4" strokeWidth="1.400" />
      {sign && <path d={sign === "plus" ? "M-2.400 0h4.800M0-2.400v4.800" : "M-2.400 0h4.800"} stroke="#c4c4c4" strokeWidth="1.500" />}
      <path d="M3 3 7.500 7.500" stroke="#c4c4c4" strokeWidth="2.400" />
    </g>
  );
}

function ZoomIcon({ kind }: { kind: string }) {
  const vertical = <path d="M2.500 2.500v13M1 3.500 2.500 1.500 4 3.500M1 14 2.500 16 4 14" fill="none" stroke="#c4c4c4" />;
  const horizontal = (
    <>
      <path d="M3 2h14" stroke="#c4c4c4" />
      <path d="M1.500 2 4.500 .2v3.600zM18.500 2 15.500 .2v3.600z" fill="#c4c4c4" />
    </>
  );
  return (
    <svg width="20" height="19" viewBox="0 0 20 19" opacity={kind.endsWith("off") ? 0.32 : 1}>
      {kind === "vin" && <>{vertical}<Lens x={10} y={9} sign="plus" /></>}
      {kind === "vout" && <>{vertical}<Lens x={10} y={9} sign="minus" /></>}
      {kind === "hin" && <>{horizontal}<Lens x={10.500} y={9.500} sign="plus" /></>}
      {kind === "hout-off" && <>{horizontal}<Lens x={10.500} y={9.500} sign="minus" /></>}
      {kind === "full-off" && (
        <>
          <path d="M10 0 12 2.500H8zM10 19 12 16.500H8zM1 9.500 3.500 7.500v4zM19 9.500 16.500 7.500v4z" fill="#c4c4c4" />
          <Lens x={9.500} y={9} sign="minus" />
        </>
      )}
      {kind === "in" && <><path d="M0 9.500 3 7v5z" fill="#c4c4c4" /><path d="M6 4.200H4.500v10.600H6" fill="none" stroke="#c4c4c4" strokeWidth="1.400" /><Lens x={12} y={9} /></>}
      {kind === "out" && <><path d="M6.500 9.500 3.500 7v5z" fill="#c4c4c4" /><path d="M0 4.200h1.500v10.600H0" fill="none" stroke="#c4c4c4" strokeWidth="1.400" /><Lens x={12} y={9} /></>}
      {kind === "sel" && <><path d="M0 9.500 2.300 7.200v4.600zM8.300 9.500 5.800 7.200v4.600z" fill="#c4c4c4" /><path d="M2.900 4v11M5 4v11" stroke="#c4c4c4" /><Lens x={12.500} y={9} /></>}
    </svg>
  );
}

function BottomBar() {
  return (
    <div className="flex h-[36px] w-full border-t border-[#565656] bg-[#404040]">
      <div className="w-[588px] pl-[10px] pt-[8px]">
        <span className="block h-[21px] w-[63px] whitespace-nowrap border-b border-dotted border-[#b9860c] font-['Liberation_Sans',Arial,sans-serif] text-[17px] leading-[23px] tracking-[-0.45px] text-[#c48f12]">0:00.000</span>
      </div>
      <div className="w-[761px] pt-[6px]"><Transport /></div>
      <div className="flex items-start pt-[9px]">
        <div className="w-[30px]"><ZoomIcon kind="vin" /></div>
        <div className="flex w-[58px]">
          <ZoomIcon kind="vout" />
          <div className="-mt-[4px] h-[12px] w-[3px] border-r border-[#5c5c5c] bg-[#222222]" />
          <div className="ml-[4px]"><ZoomIcon kind="hin" /></div>
        </div>
        <div className="w-[30px]"><ZoomIcon kind="hout-off" /></div>
        <div className="w-[31px]"><ZoomIcon kind="full-off" /></div>
        <div className="w-[28px]"><ZoomIcon kind="in" /></div>
        <div className="w-[30px]"><ZoomIcon kind="out" /></div>
        <ZoomIcon kind="sel" />
      </div>
    </div>
  );
}

/* ---------- page ---------- */

export default function App() {
  return (
    <div className="flex h-[819px] w-[1591px] flex-col overflow-hidden bg-[#414141]">
      <div className="flex h-[52px] pl-[6px] pt-[7px]">
        <div className="h-[30px] border-b border-[#585858]"><Overview /></div>
        <svg className="ml-[11px] mt-[5px]" width="20" height="19" viewBox="0 0 20 19" opacity="0.3">
          <path d="M10 1 12 3H8zM10 18 12 16H8zM1 9.500 3 7.500v4zM19 9.500 17 7.500v4z" fill="#c4c4c4" />
          <Lens x={9.500} y={9} sign="minus" />
        </svg>
      </div>
      <div className="flex h-[26px] pl-[6px]">
        <div className="border-t border-[#585858]"><Ruler /></div>
        <div className="ml-[7px] mt-[3px] flex h-[20px] w-[20px] items-center justify-center border border-black bg-[#2c2c2c]">
          <svg width="12" height="12" viewBox="0 0 12 12">
            <path d="M2.500 8V5.500a3.500 3.500 0 0 1 7 0V8" fill="none" stroke="#a8a8a8" strokeWidth="3" />
            <path d="M1 8.500h3V11H1zM8 8.500h3V11H8z" fill="#f4f4f4" />
          </svg>
        </div>
      </div>
      <div className="flex h-[705px] pl-[6px]">
        <div className="flex w-[1579px] flex-col border-b border-l border-r border-b-black border-l-[#1a1a1a] border-r-[#161616]">
          <div className="flex h-[390px]">
            <div className="border-t border-black"><Waveform /></div>
            <div className="border-t border-black"><Scale from={79} height={389} unit="dB" unitY={91} marks={DB_MARKS} minor={DB_MINOR} /></div>
          </div>
          <Splitter />
          <div className="relative flex h-[305px]">
            <div className="h-[305px] w-[1516px] bg-black"><Spectrogram /></div>
            <Scale from={477} height={305} unit="Hz" unitY={489} marks={HZ_MARKS} minor={[778]} hz />
            <GainPanel />
          </div>
        </div>
        <div className="w-px bg-[#565656]" />
      </div>
      <BottomBar />
    </div>
  );
}
